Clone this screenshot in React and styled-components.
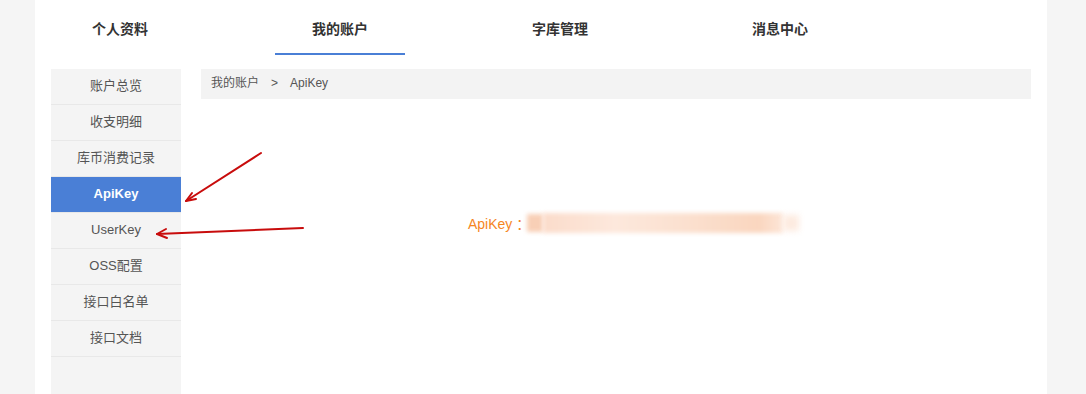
import React from 'react';
import styled, { createGlobalStyle } from 'styled-components';

const GlobalStyle = createGlobalStyle`
  html, body {
    margin: 0;
    padding: 0;
    background: #f5f5f5;
    font-family: "Liberation Sans", "Noto Sans CJK SC", sans-serif;
  }
`;

const tabs = ['个人资料', '我的账户', '字库管理', '消息中心'];
const menu = ['账户总览', '收支明细', '库币消费记录', 'ApiKey', 'UserKey', 'OSS配置', '接口白名单', '接口文档'];

export default function App() {
  return (
    <Page>
      <GlobalStyle />
      <Container>
        <TabBar>
          {tabs.map((t) => (
            <Tab key={t} active={t === '我的账户'}>
              {t}
            </Tab>
          ))}
        </TabBar>
        <Body>
          <SideMenu>
            {menu.map((m) => (
              <MenuItem key={m} active={m === 'ApiKey'}>
                {m}
              </MenuItem>
            ))}
          </SideMenu>
          <Main>
            <Breadcrumb>
              我的账户<Sep>&gt;</Sep>ApiKey
            </Breadcrumb>
            <KeyRow>
              <KeyLabel>ApiKey ：</KeyLabel>
              <BlurredKey>
                <BlurStart />
                <BlurBody />
                <BlurEnd />
              </BlurredKey>
            </KeyRow>
          </Main>
        </Body>
      </Container>
      <Annotations width="1086" height="394" viewBox="0 0 1086 394">
        <g stroke="#c80c0c" strokeWidth="2" fill="none" strokeLinecap="round" strokeLinejoin="round">
          <path d="M261 153 L186 201" />
          <path d="M186 201 L192 193 M186 201 L196 199" />
          <path d="M303 228 L157 234" />
          <path d="M157 234 L166 229 M157 234 L167 238" />
        </g>
      </Annotations>
    </Page>
  );
}

const Page = styled.div`
  position: relative;
  height: 394px;
  overflow: hidden;
`;

const Container = styled.div`
  width: 1012px;
  margin-left: 35px;
  height: 394px;
  background: #ffffff;
  display: flex;
  flex-direction: column;
`;

const TabBar = styled.div`
  display: flex;
  gap: 90px;
  padding-left: 20px;
  height: 55px;
`;

const Tab = styled.div`
  width: 130px;
  box-sizing: border-box;
  text-align: center;
  font-size: 14px;
  font-weight: bold;
  color: #333;
  padding-top: 18px;
  border-bottom: 2px solid ${(p) => (p.active ? '#4a7fd6' : 'transparent')};
`;

const Body = styled.div`
  flex: 1;
  display: flex;
  gap: 20px;
  padding: 14px 16px 0 16px;
`;

const SideMenu = styled.div`
  width: 130px;
  background: #f4f4f4;
  display: flex;
  flex-direction: column;
`;

const MenuItem = styled.div`
  height: 35px;
  line-height: 33px;
  border-bottom: 1px solid #e8e8e8;
  text-align: center;
  font-size: 13px;
  font-weight: ${(p) => (p.active ? 'bold' : 'normal')};
  color: ${(p) => (p.active ? '#ffffff' : '#555')};
  background: ${(p) => (p.active ? '#4a7fd6' : 'transparent')};
`;

const Main = styled.div`
  flex: 1;
  display: flex;
  flex-direction: column;
`;

const Breadcrumb = styled.div`
  height: 30px;
  line-height: 29px;
  background: #f3f3f3;
  padding-left: 10px;
  font-size: 12px;
  color: #555;
`;

const Sep = styled.span`
  margin: 0 12px 0 12px;
`;

const KeyRow = styled.div`
  display: flex;
  align-items: center;
  margin-top: 114px;
  padding-left: 267px;
`;

const KeyLabel = styled.span`
  font-size: 14px;
  color: #f5861f;
  margin-right: -3px;
`;

const BlurredKey = styled.div`
  display: flex;
  align-items: center;
  height: 20px;
`;

const BlurStart = styled.div`
  width: 16px;
  height: 18px;
  background: #f8cfb6;
  filter: blur(2px);
`;

const BlurBody = styled.div`
  width: 240px;
  height: 20px;
  background: linear-gradient(90deg, #fbdccb, #fde8dc 30%, #fbe0cf 60%, #fad6bf 90%, #fde6d8);
  filter: blur(2px);
`;

const BlurEnd = styled.div`
  width: 16px;
  height: 16px;
  background: #fdebe0;
  filter: blur(3px);
`;

const Annotations = styled.svg`
  position: absolute;
  left: 0;
  top: 0;
  pointer-events: none;
`;
